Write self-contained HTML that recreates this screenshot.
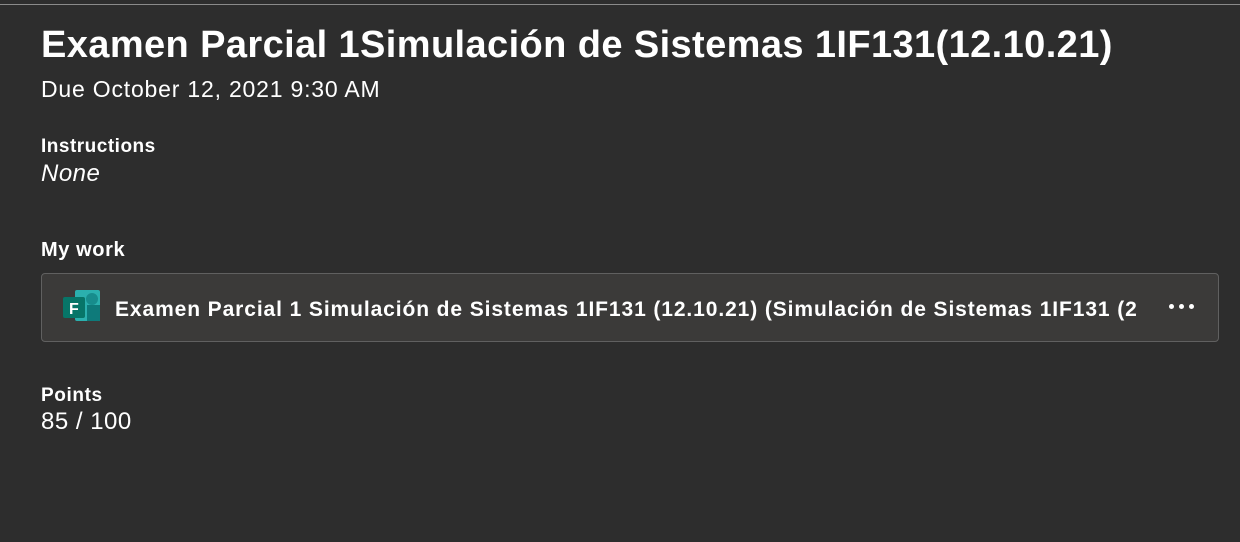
<!DOCTYPE html>
<html><head><meta charset="utf-8"><style>
html,body{margin:0;padding:0;}
body{width:1240px;height:542px;background:#2d2d2d;font-family:"Liberation Sans",sans-serif;color:#fff;position:relative;overflow:hidden;}
.top{position:absolute;left:0;top:4px;width:1240px;height:1px;background:#8a8a8a;}
.t{position:absolute;left:41px;white-space:nowrap;}
.card{position:absolute;left:41px;top:273px;width:1176px;height:67px;background:#3b3a39;border:1px solid #606060;border-radius:4px;}
</style></head><body>
<div class="top"></div>
<div class="t" style="top:24px;font-size:38px;font-weight:bold;letter-spacing:0.4px;">Examen Parcial 1Simulación de Sistemas 1IF131(12.10.21)</div>
<div class="t" style="top:76px;font-size:23px;letter-spacing:0.8px;">Due October 12, 2021 9:30 AM</div>
<div class="t" style="top:136px;font-size:19px;font-weight:bold;letter-spacing:0.5px;">Instructions</div>
<div class="t" style="top:160px;font-size:24px;font-style:italic;letter-spacing:0.5px;">None</div>
<div class="t" style="top:239px;font-size:20px;font-weight:bold;letter-spacing:0.6px;">My work</div>
<div class="card">
<svg style="position:absolute;left:21px;top:16px" width="40" height="34" viewBox="0 0 40 34">
<rect x="12" y="0" width="25" height="31" rx="2" fill="#2bb0ae"/>
<rect x="24" y="15" width="13" height="16" fill="#0e7a7a"/>
<circle cx="29" cy="9" r="6" fill="#178c8c"/>
<rect x="0" y="7" width="22" height="21" rx="2" fill="#077568"/>
<text x="6" y="24" font-family="Liberation Sans" font-weight="bold" font-size="16" fill="#fff">F</text>
</svg>
<div style="position:absolute;left:73px;top:24px;font-size:21px;font-weight:bold;letter-spacing:0.9px;white-space:nowrap;width:1030px;overflow:hidden;">Examen Parcial 1 Simulación de Sistemas 1IF131 (12.10.21) (Simulación de Sistemas 1IF131 (2</div>
<div style="position:absolute;left:1127px;top:30px;">
<span style="position:absolute;left:0;width:5px;height:5px;border-radius:50%;background:#fff"></span>
<span style="position:absolute;left:10px;width:5px;height:5px;border-radius:50%;background:#fff"></span>
<span style="position:absolute;left:20px;width:5px;height:5px;border-radius:50%;background:#fff"></span>
</div>
</div>
<div class="t" style="top:385px;font-size:19px;font-weight:bold;letter-spacing:0.6px;">Points</div>
<div class="t" style="top:408px;font-size:24px;letter-spacing:0.5px;">85 / 100</div>
</body></html>
